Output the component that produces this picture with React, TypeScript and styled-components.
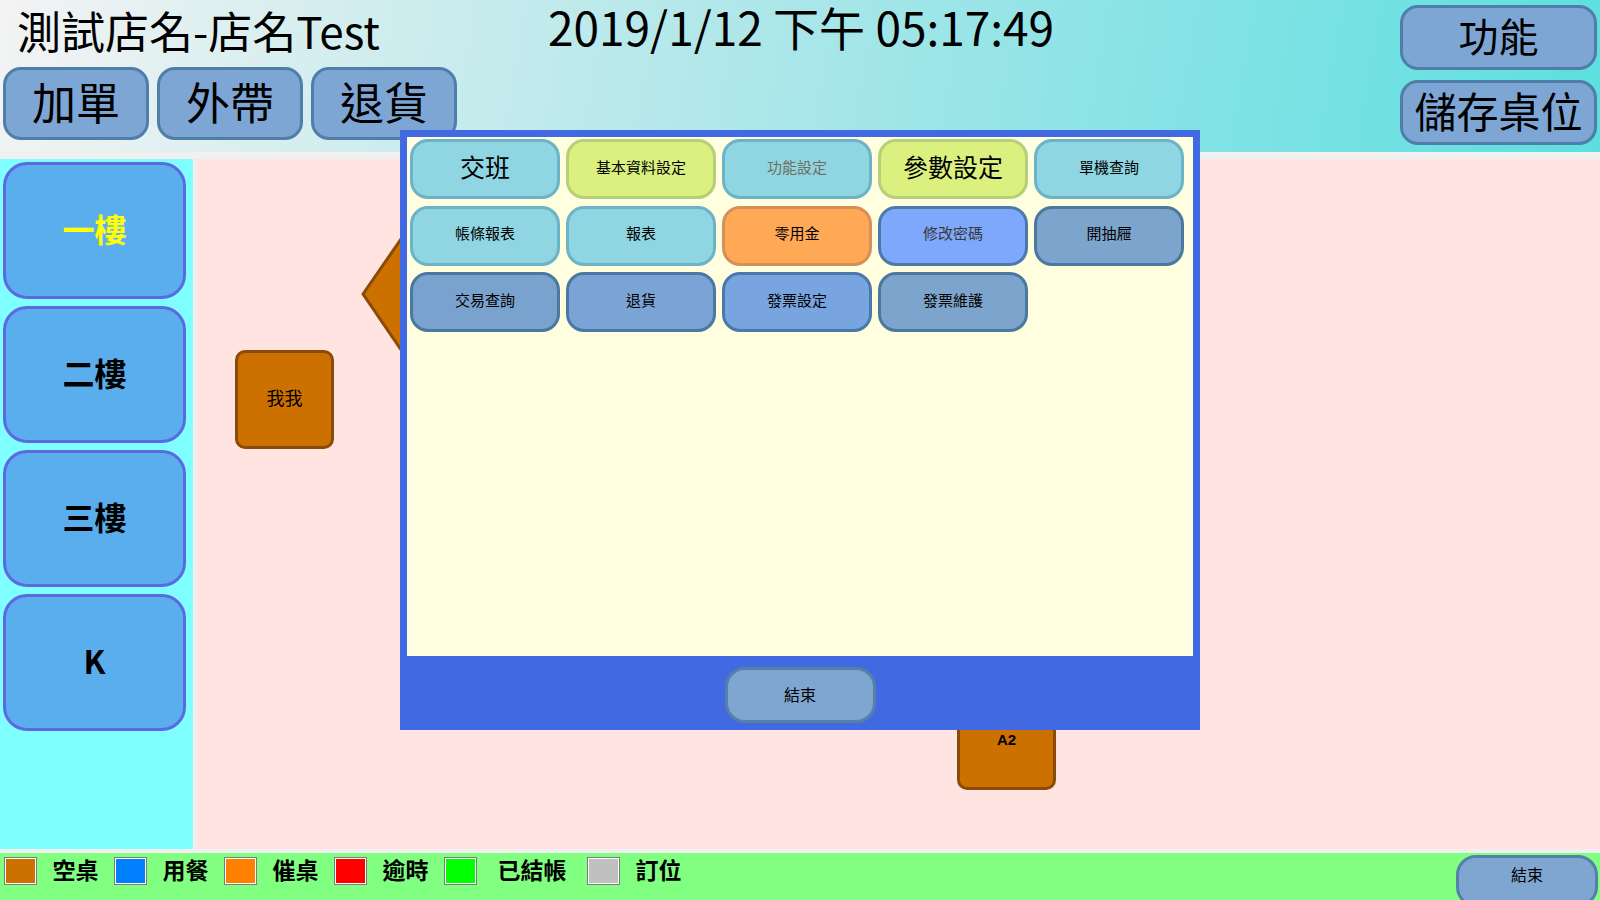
import React from "react";
import styled, { createGlobalStyle } from "styled-components";

const FONT = `"Noto Sans CJK TC", "Noto Sans", "Liberation Sans", sans-serif`;

const Global = createGlobalStyle`
  html, body { margin: 0; padding: 0; background: #f0f0f0; }
  body { font-family: ${FONT}; color: #000; }
  * { box-sizing: border-box; }
`;

const Page = styled.div`
  position: relative;
  width: 1600px;
  height: 900px;
  overflow: hidden;
  display: flex;
  flex-direction: column;
  background: #f0f0f0;
`;

const Header = styled.header`
  height: 152px;
  flex: none;
  display: flex;
  background: linear-gradient(100deg, #f3f3f3 0%, #a9e6e9 50%, #5cdfe0 100%);
`;

const LeftCol = styled.div`
  width: 548px;
  padding-left: 3px;
  display: flex;
  flex-direction: column;
`;

const Title = styled.div`
  margin-left: 14px;
  font-size: 44px;
  line-height: 60px;
  white-space: nowrap;
`;

const ActionRow = styled.div`
  margin-top: 7px;
  display: flex;
  gap: 8px;
`;

const HeadButton = styled.div<{ $w: number; $h: number; $size: number }>`
  width: ${(p) => p.$w}px;
  height: ${(p) => p.$h}px;
  display: flex;
  align-items: center;
  justify-content: center;
  padding-bottom: 5px;
  background: #7ea6d4;
  border: 3px solid #4f7ea8;
  border-radius: 18px;
  font-size: ${(p) => p.$size}px;
  line-height: 1.1;
  white-space: nowrap;
`;

const DateText = styled.div`
  font-size: 46px;
  line-height: 52px;
  white-space: nowrap;
`;

const Spacer = styled.div`
  flex: 1;
`;

const RightCol = styled.div`
  width: 197px;
  margin-right: 3px;
  padding-top: 5px;
  display: flex;
  flex-direction: column;
  gap: 10px;
`;

const Middle = styled.div`
  margin-top: 7px;
  height: 690px;
  flex: none;
  display: flex;
  gap: 2px;
`;

const Sidebar = styled.nav`
  width: 193px;
  background: #80ffff;
  padding: 3px 7px 0 3px;
  display: flex;
  flex-direction: column;
  gap: 7px;
`;

const FloorButton = styled.div<{ $active?: boolean }>`
  height: 137px;
  display: flex;
  align-items: center;
  justify-content: center;
  padding-bottom: 5px;
  background: #5aaeee;
  border: 3px solid #5c6ae2;
  border-radius: 24px;
  font-size: 32px;
  font-weight: 700;
  color: ${(p) => (p.$active ? "#ffff00" : "#000")};
`;

const Canvas = styled.main`
  flex: 1;
  position: relative;
  overflow: hidden;
  background: #ffe4e1;
`;

const Table = styled.div<{ $x: number; $y: number; $bold?: boolean }>`
  position: absolute;
  left: ${(p) => p.$x}px;
  top: ${(p) => p.$y}px;
  width: 99px;
  height: 99px;
  display: flex;
  align-items: center;
  justify-content: center;
  padding-bottom: ${(p) => (p.$bold ? 2 : 5)}px;
  background: #cc7000;
  border: 3px solid #8a4a08;
  border-radius: 10px;
  font-family: ${(p) => (p.$bold ? `"Liberation Sans", sans-serif` : FONT)};
  font-weight: ${(p) => (p.$bold ? 700 : 400)};
  font-size: ${(p) => (p.$bold ? 15 : 18)}px;
`;

const Diamond = styled.svg`
  position: absolute;
  left: 166px;
  top: -13px;
`;

const Legend = styled.footer`
  margin-top: 4px;
  height: 47px;
  flex: none;
  background: #80ff80;
  display: flex;
  align-items: flex-start;
  padding: 4px 0 0 4px;
`;

const Swatch = styled.span<{ $c: string }>`
  width: 33px;
  height: 28px;
  flex: none;
  background: ${(p) => p.$c};
  border: 1px solid #7c7c7c;
  box-shadow: inset 0 0 0 1px #ffffff;
`;

const LegendLabel = styled.span<{ $w: number }>`
  width: ${(p) => p.$w}px;
  flex: none;
  text-align: center;
  font-size: 23px;
  font-weight: 700;
  line-height: 24px;
  white-space: nowrap;
`;

const EndButton = styled.div<{ $w: number; $h: number }>`
  width: ${(p) => p.$w}px;
  height: ${(p) => p.$h}px;
  display: flex;
  align-items: center;
  justify-content: center;
  padding-bottom: 3px;
  background: #7ea6d0;
  border: 3px solid #5580a8;
  border-radius: 20px;
  font-size: 16px;
  line-height: 20px;
`;

const CornerEnd = styled(EndButton)`
  margin: -2px 2px 0 auto;
  align-items: flex-start;
  padding: 6px 0 0;
`;

const Modal = styled.section`
  position: absolute;
  left: 400px;
  top: 130px;
  width: 800px;
  height: 600px;
  background: #4169e1;
  padding: 7px 7px 0;
  display: flex;
  flex-direction: column;
`;

const ModalBody = styled.div`
  height: 519px;
  background: #ffffe0;
  padding: 2px 0 0 3px;
  display: grid;
  grid-template-columns: repeat(5, 150px);
  grid-auto-rows: 60px;
  column-gap: 6px;
  row-gap: 6.5px;
  align-content: start;
`;

const ModalFooter = styled.div`
  flex: 1;
  display: flex;
  justify-content: center;
  padding-top: 11px;
`;

type Tone = { bg: string; bd: string; fg: string };
const tones: Record<string, Tone> = {
  light: { bg: "#8fd6e2", bd: "#6cb3c8", fg: "#000" },
  lightGrey: { bg: "#8fd6e2", bd: "#6cb3c8", fg: "#6e6e5e" },
  green: { bg: "#dbf07f", bd: "#b5cf7a", fg: "#000" },
  orange: { bg: "#ffa855", bd: "#d68f58", fg: "#000" },
  corn: { bg: "#7ea8fc", bd: "#4c79a8", fg: "#3a3a3a" },
  steel: { bg: "#7ca4cc", bd: "#4b789e", fg: "#000" },
  steel2: { bg: "#7aa2ce", bd: "#4a789e", fg: "#000" },
  steel3: { bg: "#7aa4d6", bd: "#4a78a2", fg: "#000" },
  blue: { bg: "#78a4e0", bd: "#4a78a8", fg: "#000" },
};

const MenuButton = styled.div<{ $t: Tone; $big?: boolean }>`
  display: flex;
  align-items: center;
  justify-content: center;
  padding-bottom: 4px;
  background: ${(p) => p.$t.bg};
  border: 3px solid ${(p) => p.$t.bd};
  border-radius: 18px;
  color: ${(p) => p.$t.fg};
  font-size: ${(p) => (p.$big ? 25 : 15)}px;
  line-height: 1.1;
  white-space: nowrap;
`;

const menu: { label: string; tone: string; big?: boolean }[] = [
  { label: "交班", tone: "light", big: true },
  { label: "基本資料設定", tone: "green" },
  { label: "功能設定", tone: "lightGrey" },
  { label: "參數設定", tone: "green", big: true },
  { label: "單機查詢", tone: "light" },
  { label: "帳條報表", tone: "light" },
  { label: "報表", tone: "light" },
  { label: "零用金", tone: "orange" },
  { label: "修改密碼", tone: "corn" },
  { label: "開抽屜", tone: "steel" },
  { label: "交易查詢", tone: "steel2" },
  { label: "退貨", tone: "steel3" },
  { label: "發票設定", tone: "blue" },
  { label: "發票維護", tone: "steel" },
];

const floors = [
  { label: "一樓", active: true },
  { label: "二樓" },
  { label: "三樓" },
  { label: "K" },
];

const legend = [
  { c: "#cc7000", t: "空桌" },
  { c: "#0080ff", t: "用餐" },
  { c: "#ff8000", t: "催桌" },
  { c: "#ff0000", t: "逾時" },
  { c: "#00ff00", t: "已結帳" },
  { c: "#c0c0c0", t: "訂位" },
];

export default function App() {
  return (
    <>
      <Global />
      <Page>
        <Header>
          <LeftCol>
            <Title>測試店名-店名Test</Title>
            <ActionRow>
              {["加單", "外帶", "退貨"].map((t) => (
                <HeadButton key={t} $w={146} $h={73} $size={44}>
                  {t}
                </HeadButton>
              ))}
            </ActionRow>
          </LeftCol>
          <DateText>2019/1/12 下午 05:17:49</DateText>
          <Spacer />
          <RightCol>
            <HeadButton $w={197} $h={65} $size={40}>
              功能
            </HeadButton>
            <HeadButton $w={197} $h={65} $size={42}>
              儲存桌位
            </HeadButton>
          </RightCol>
        </Header>
        <Middle>
          <Sidebar>
            {floors.map((f) => (
              <FloorButton key={f.label} $active={f.active}>
                {f.label}
              </FloorButton>
            ))}
          </Sidebar>
          <Canvas>
            <Diamond width="206" height="298" viewBox="0 0 206 298">
              <polygon
                points="2,148 103,2 204,148 103,296"
                fill="#cc7000"
                stroke="#8a4a08"
                strokeWidth="3"
              />
            </Diamond>
            <Table $x={40} $y={191}>我我</Table>
            <Table $x={762} $y={532} $bold>
              A2
            </Table>
          </Canvas>
        </Middle>
        <Legend>
          {legend.map((l) => (
            <React.Fragment key={l.t}>
              <Swatch $c={l.c} />
              <LegendLabel $w={l.t.length > 2 ? 110 : 77}>{l.t}</LegendLabel>
            </React.Fragment>
          ))}
          <CornerEnd $w={142} $h={52}>
            結束
          </CornerEnd>
        </Legend>
        <Modal>
          <ModalBody>
            {menu.map((m) => (
              <MenuButton key={m.label} $t={tones[m.tone]} $big={m.big}>
                {m.label}
              </MenuButton>
            ))}
          </ModalBody>
          <ModalFooter>
            <EndButton $w={151} $h={56}>
              結束
            </EndButton>
          </ModalFooter>
        </Modal>
      </Page>
    </>
  );
}
